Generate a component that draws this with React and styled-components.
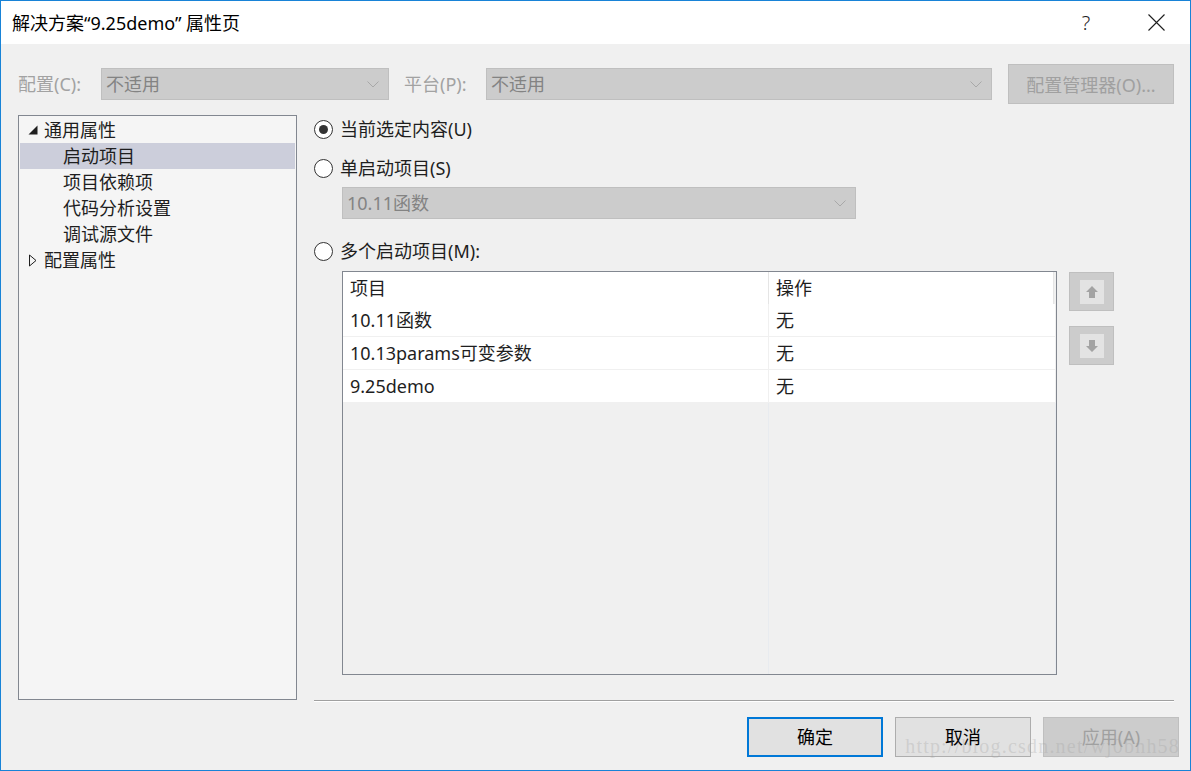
import React from 'react';
import styled, { createGlobalStyle } from 'styled-components';

const GlobalStyle = createGlobalStyle`
  html, body {
    margin: 0;
    padding: 0;
    background: #ffffff;
  }
  body {
    font-family: "Noto Sans", "Noto Sans CJK SC", sans-serif;
    color: #1e1e1e;
  }
`;

const treeItems = [
  { label: '通用属性', level: 0, expander: 'open' },
  { label: '启动项目', level: 1, selected: true },
  { label: '项目依赖项', level: 1 },
  { label: '代码分析设置', level: 1 },
  { label: '调试源文件', level: 1 },
  { label: '配置属性', level: 0, expander: 'closed' },
];

const projects = [
  { name: '10.11函数', action: '无' },
  { name: '10.13params可变参数', action: '无' },
  { name: '9.25demo', action: '无' },
];

const Chevron = () => (
  <svg width="12" height="7" viewBox="0 0 12 7">
    <path d="M0.5 0.5 L6 6 L11.5 0.5" fill="none" stroke="#a8a8a8" strokeWidth="1" />
  </svg>
);

const Expander = ({ kind }) =>
  kind === 'open' ? (
    <svg width="10" height="10" viewBox="0 0 10 10">
      <polygon points="9.5,0.5 9.5,9.5 0.5,9.5" fill="#1e1e1e" />
    </svg>
  ) : (
    <svg width="10" height="13" viewBox="0 0 10 13">
      <polygon points="1.5,1 8,6.5 1.5,12" fill="none" stroke="#1e1e1e" strokeWidth="1" />
    </svg>
  );

const Arrow = ({ down }) => (
  <svg width="14" height="12" viewBox="0 0 14 12" style={down ? { transform: 'rotate(180deg)' } : undefined}>
    <polygon points="7,0 13,6 10,6 10,12 4,12 4,6 1,6" fill="#a3a3a3" />
  </svg>
);

const ComboBox = ({ value, width }) => (
  <Combo $width={width}>
    <ComboText>{value}</ComboText>
    <Chevron />
  </Combo>
);

const Radio = ({ checked, label }) => (
  <RadioRow>
    <RadioCircle>{checked && <RadioDot />}</RadioCircle>
    <RadioLabel>{label}</RadioLabel>
  </RadioRow>
);

const App = () => (
  <>
    <GlobalStyle />
    <Window>
      <TitleBar>
        <Title>解决方案“9.25demo” 属性页</Title>
        <TitleButtons>
          <HelpButton>?</HelpButton>
          <CloseButton>
            <svg width="17" height="17" viewBox="0 0 17 17">
              <path d="M0.5 0.5 L16.5 16.5 M16.5 0.5 L0.5 16.5" stroke="#1e1e1e" strokeWidth="1.1" />
            </svg>
          </CloseButton>
        </TitleButtons>
      </TitleBar>

      <Body>
        <ConfigRow>
          <FieldLabel $width={83}>配置(C):</FieldLabel>
          <ComboBox value="不适用" width={288} />
          <FieldLabel $width={82} $gap={15}>平台(P):</FieldLabel>
          <ComboBox value="不适用" width={506} />
          <ManagerButton>配置管理器(O)...</ManagerButton>
        </ConfigRow>

        <Main>
          <Tree>
            {treeItems.map((item) => (
              <TreeItem key={item.label} $selected={item.selected} $level={item.level}>
                <ExpanderSlot>{item.expander && <Expander kind={item.expander} />}</ExpanderSlot>
                {item.label}
              </TreeItem>
            ))}
          </Tree>

          <Content>
            <Radio checked label="当前选定内容(U)" />
            <Spacer $h={13} />
            <Radio label="单启动项目(S)" />
            <Indent $top={6}>
              <ComboBox value="10.11函数" width={514} />
            </Indent>
            <Spacer $h={19} />
            <Radio label="多个启动项目(M):" />

            <ListRow>
              <List>
                <HeaderRow>
                  <HeaderCell>项目</HeaderCell>
                  <HeaderCell>操作</HeaderCell>
                </HeaderRow>
                {projects.map((p) => (
                  <DataRow key={p.name}>
                    <Cell>{p.name}</Cell>
                    <Cell>{p.action}</Cell>
                  </DataRow>
                ))}
                <EmptyArea>
                  <EmptyCell />
                  <EmptyCell />
                </EmptyArea>
              </List>
              <MoveButtons>
                <MoveButton>
                  <MoveInner>
                    <Arrow />
                  </MoveInner>
                </MoveButton>
                <MoveButton>
                  <MoveInner>
                    <Arrow down />
                  </MoveInner>
                </MoveButton>
              </MoveButtons>
            </ListRow>

            <Separator />
          </Content>
        </Main>

        <Footer>
          <DialogButton $primary>确定</DialogButton>
          <DialogButton>取消</DialogButton>
          <DialogButton $disabled>应用(A)</DialogButton>
        </Footer>
      </Body>

      <Watermark>http://blog.csdn.net/wj0bnh58</Watermark>
    </Window>
  </>
);

export default App;

const Window = styled.div`
  position: relative;
  width: 1191px;
  height: 771px;
  box-sizing: border-box;
  border: 1px solid #1883d7;
  background: #f0f0f0;
  display: flex;
  flex-direction: column;
  overflow: hidden;
`;

const TitleBar = styled.div`
  height: 43px;
  flex-shrink: 0;
  background: #ffffff;
  display: flex;
  align-items: center;
  justify-content: space-between;
  padding-left: 11px;
`;

const Title = styled.div`
  font-size: 18px;
  line-height: 24px;
  color: #000000;
`;

const TitleButtons = styled.div`
  display: flex;
  align-items: center;
  gap: 24px;
  margin-right: 11px;
`;

const HelpButton = styled.div`
  width: 46px;
  text-align: center;
  font-family: "Noto Sans", sans-serif;
  font-size: 20px;
  font-weight: 300;
  line-height: 24px;
  color: #1e1e1e;
`;

const CloseButton = styled.div`
  width: 46px;
  height: 24px;
  display: flex;
  align-items: center;
  justify-content: center;
`;

const Body = styled.div`
  flex: 1;
  display: flex;
  flex-direction: column;
  padding: 20px 16px 0 17px;
`;

const ConfigRow = styled.div`
  height: 40px;
  display: flex;
  align-items: center;
`;

const FieldLabel = styled.div`
  width: ${(p) => p.$width}px;
  margin-left: ${(p) => p.$gap || 0}px;
  font-size: 18px;
  line-height: 24px;
  color: #a2a2a2;
  flex-shrink: 0;
`;

const Combo = styled.div`
  width: ${(p) => p.$width}px;
  height: 32px;
  box-sizing: border-box;
  background: #cccccc;
  border: 1px solid #bfbfbf;
  display: flex;
  align-items: center;
  justify-content: space-between;
  padding: 0 9px 0 4px;
  flex-shrink: 0;
`;

const ComboText = styled.span`
  font-size: 18px;
  line-height: 24px;
  color: #838383;
`;

const ManagerButton = styled.div`
  margin-left: 16px;
  width: 166px;
  height: 40px;
  box-sizing: border-box;
  background: #cccccc;
  border: 1px solid #bfbfbf;
  display: flex;
  align-items: center;
  justify-content: center;
  font-size: 18px;
  color: #a0a0a0;
  flex-shrink: 0;
`;

const Main = styled.div`
  margin-top: 11px;
  height: 587px;
  display: flex;
  align-items: flex-start;
  gap: 17px;
`;

const Tree = styled.div`
  width: 279px;
  height: 585px;
  box-sizing: border-box;
  border: 1px solid #828790;
  background: #f5f5f5;
  padding: 1px;
  flex-shrink: 0;
`;

const TreeItem = styled.div`
  height: 26px;
  display: flex;
  align-items: center;
  padding-left: ${(p) => 8 + p.$level * 19}px;
  background: ${(p) => (p.$selected ? '#cccedb' : 'transparent')};
  font-size: 18px;
  line-height: 24px;
  color: #1e1e1e;
`;

const ExpanderSlot = styled.span`
  width: 16px;
  display: flex;
  align-items: center;
  justify-content: flex-start;
  flex-shrink: 0;
`;

const Content = styled.div`
  flex: 1;
  align-self: stretch;
  display: flex;
  flex-direction: column;
  padding-top: 1px;
`;

const RadioRow = styled.div`
  height: 26px;
  display: flex;
  align-items: center;
  gap: 7px;
`;

const RadioCircle = styled.span`
  width: 19px;
  height: 19px;
  box-sizing: border-box;
  border-radius: 50%;
  border: 1px solid #333333;
  background: #ffffff;
  display: flex;
  align-items: center;
  justify-content: center;
  flex-shrink: 0;
`;

const RadioDot = styled.span`
  width: 9px;
  height: 9px;
  border-radius: 50%;
  background: #333333;
`;

const RadioLabel = styled.span`
  font-size: 18px;
  line-height: 24px;
  color: #1e1e1e;
`;

const Spacer = styled.div`
  height: ${(p) => p.$h}px;
  flex-shrink: 0;
`;

const Indent = styled.div`
  margin-top: ${(p) => p.$top}px;
  padding-left: 28px;
`;

const ListRow = styled.div`
  margin-top: 7px;
  padding-left: 28px;
  display: flex;
  align-items: flex-start;
  gap: 12px;
`;

const List = styled.div`
  width: 715px;
  height: 404px;
  box-sizing: border-box;
  border: 1px solid #828790;
  background: #f0f0f0;
  display: flex;
  flex-direction: column;
`;

const gridCols = `426px 1fr`;

const HeaderRow = styled.div`
  height: 32px;
  display: grid;
  grid-template-columns: ${gridCols};
  background: #ffffff;
  margin-right: 2px;
`;

const HeaderCell = styled.div`
  display: flex;
  align-items: center;
  padding-left: 7px;
  font-size: 18px;
  line-height: 24px;
  color: #1e1e1e;
  border-right: 1px solid #e5e5e5;
`;

const DataRow = styled.div`
  height: 33px;
  box-sizing: border-box;
  display: grid;
  grid-template-columns: ${gridCols};
  background: #ffffff;
  border-bottom: 1px solid #f0f0f0;
`;

const Cell = styled.div`
  display: flex;
  align-items: center;
  padding-left: 7px;
  font-size: 18px;
  line-height: 24px;
  color: #1e1e1e;
  border-right: 1px solid #f0f0f0;
`;

const EmptyArea = styled.div`
  flex: 1;
  display: grid;
  grid-template-columns: ${gridCols};
`;

const EmptyCell = styled.div`
  border-right: 1px solid #e8ebef;
`;

const MoveButtons = styled.div`
  margin-top: 1px;
  display: flex;
  flex-direction: column;
  gap: 15px;
`;

const MoveButton = styled.div`
  width: 45px;
  height: 39px;
  box-sizing: border-box;
  background: #cccccc;
  border: 1px solid #bfbfbf;
  display: flex;
  align-items: center;
  justify-content: center;
`;

const MoveInner = styled.div`
  width: 24px;
  height: 24px;
  background: #e3e3e3;
  display: flex;
  align-items: center;
  justify-content: center;
`;

const Separator = styled.div`
  margin-top: auto;
  height: 1px;
  background: #a0a0a0;
  border-bottom: 1px solid #ffffff;
`;

const Footer = styled.div`
  margin-top: 15px;
  display: flex;
  justify-content: flex-end;
  gap: 12px;
  margin-right: -5px;
`;

const DialogButton = styled.div`
  width: 136px;
  height: 40px;
  box-sizing: border-box;
  display: flex;
  align-items: center;
  justify-content: center;
  font-size: 18px;
  line-height: 24px;
  background: ${(p) => (p.$disabled ? '#cccccc' : '#e1e1e1')};
  color: ${(p) => (p.$disabled ? '#a0a0a0' : '#000000')};
  border: ${(p) =>
    p.$primary ? '2px solid #0078d7' : p.$disabled ? '1px solid #bfbfbf' : '1px solid #adadad'};
`;

const Watermark = styled.div`
  position: absolute;
  right: 10px;
  bottom: 12px;
  font-family: "Liberation Serif", serif;
  font-size: 20px;
  letter-spacing: 1.2px;
  color: rgba(160, 160, 160, 0.3);
  pointer-events: none;
`;
